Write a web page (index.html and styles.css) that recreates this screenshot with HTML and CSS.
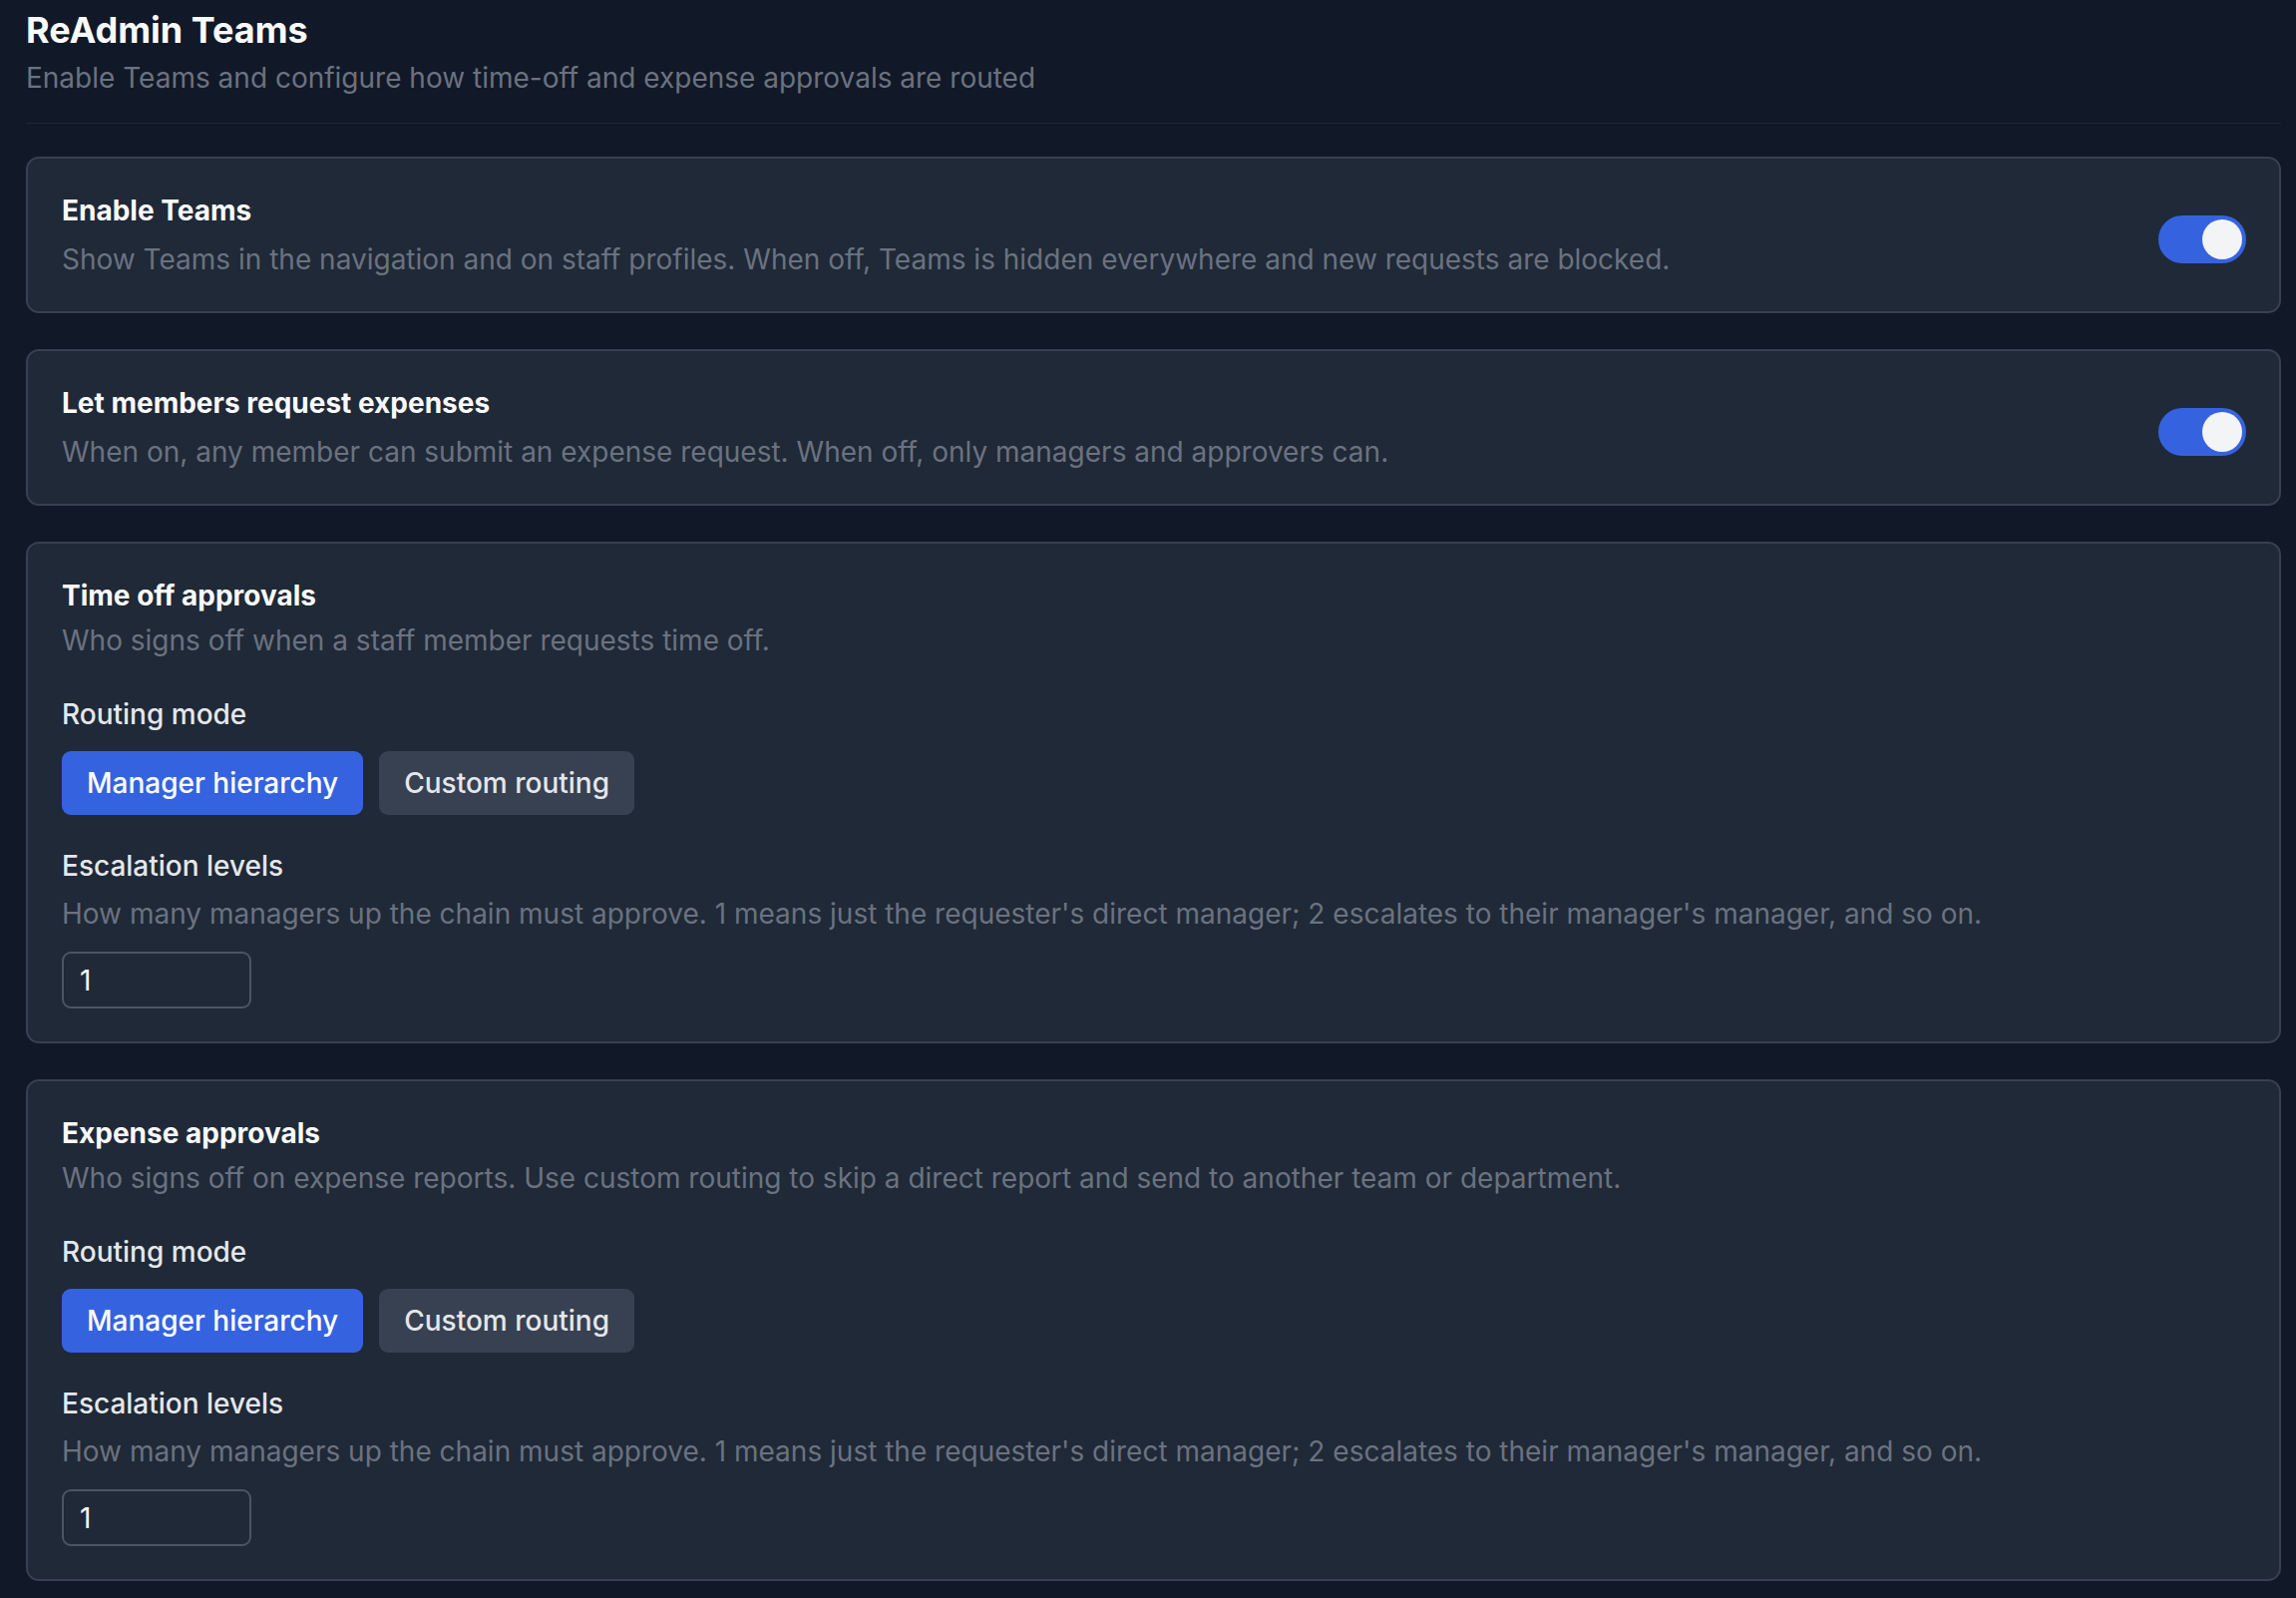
FILE: index.html
```html
<!DOCTYPE html>
<html lang="en">
<head>
    <meta charset="UTF-8">
    <title>ReAdmin Teams</title>
    <link rel="stylesheet" href="styles.css">
</head>
<body>
<div class="page">
    <div class="page-head">
        <h1>ReAdmin Teams</h1>
        <p>Enable Teams and configure how time-off and expense approvals are routed</p>
    </div>

    <div class="card row">
        <div>
            <h3>Enable Teams</h3>
            <p class="muted">Show Teams in the navigation and on staff profiles. When off, Teams is hidden everywhere and new requests are blocked.</p>
        </div>
        <span class="switch on"><span class="knob"></span></span>
    </div>

    <div class="card row">
        <div>
            <h3>Let members request expenses</h3>
            <p class="muted">When on, any member can submit an expense request. When off, only managers and approvers can.</p>
        </div>
        <span class="switch on"><span class="knob"></span></span>
    </div>

    <div class="card">
        <h3>Time off approvals</h3>
        <p class="muted">Who signs off when a staff member requests time off.</p>

        <div class="field">
            <label>Routing mode</label>
            <div class="seg">
                <button class="active">Manager hierarchy</button>
                <button>Custom routing</button>
            </div>
        </div>

        <div class="field">
            <label>Escalation levels</label>
            <p class="muted">How many managers up the chain must approve. 1 means just the requester's direct manager; 2 escalates to their manager's manager, and so on.</p>
            <input class="num" type="text" value="1">
        </div>
    </div>

    <div class="card">
        <h3>Expense approvals</h3>
        <p class="muted">Who signs off on expense reports. Use custom routing to skip a direct report and send to another team or department.</p>

        <div class="field">
            <label>Routing mode</label>
            <div class="seg">
                <button class="active">Manager hierarchy</button>
                <button>Custom routing</button>
            </div>
        </div>

        <div class="field">
            <label>Escalation levels</label>
            <p class="muted">How many managers up the chain must approve. 1 means just the requester's direct manager; 2 escalates to their manager's manager, and so on.</p>
            <input class="num" type="text" value="1">
        </div>
    </div>
</div>
</body>
</html>
```

FILE: styles.css
```css
*, :after, :before {
    box-sizing: border-box;
}
html, body {
    margin: 0;
    background: #111827;
}
body {
    font-family: Inter, "Noto Sans", sans-serif;
    font-size: 28px;
    line-height: 42px;
    color: #f9fafb;
}
h1, h3, p {
    margin: 0;
}
.page {
    padding: 6px 15px 20px 26px;
}
.page-head {
    padding-bottom: 24px;
    margin-bottom: 33px;
    border-bottom: 1px solid #1f2734;
}
.page-head h1 {
    font-size: 36px;
    line-height: 48px;
    font-weight: 700;
}
.page-head p {
    margin-top: 3px;
    color: #6b7280;
}
.card {
    margin-bottom: 36px;
    padding: 31px 34px 33px;
    background: #1f2937;
    border: 2px solid #374151;
    border-radius: 13px;
}
.card h3 {
    font-size: 28px;
    font-weight: 700;
}
.card h3 + .muted {
    margin-top: 3px;
}
.card.row {
    display: flex;
    align-items: center;
    justify-content: space-between;
    gap: 24px;
    padding-bottom: 31px;
    padding-right: 33px;
}
.card.row h3 + .muted {
    margin-top: 7px;
}
.muted {
    color: #6b7280;
}
.switch {
    flex: none;
    display: flex;
    align-items: center;
    justify-content: flex-end;
    width: 88px;
    height: 48px;
    margin-top: 9px;
    padding: 4px;
    border-radius: 24px;
    background: #4b5563;
}
.switch.on {
    background: #3563e0;
}
.switch .knob {
    width: 40px;
    height: 40px;
    border-radius: 50%;
    background: #f3f4f6;
}
.field {
    margin-top: 30px;
}
.field:first-of-type {
    margin-top: 32px;
}
.field label {
    display: block;
    font-weight: 500;
    color: #e5e7eb;
}
.field .muted {
    margin-top: 6px;
}
.seg {
    display: flex;
    gap: 16px;
    margin-top: 16px;
}
.seg button {
    height: 64px;
    padding: 0 25px;
    font-family: inherit;
    font-size: 28px;
    font-weight: 500;
    color: #e5e7eb;
    background: #374151;
    border: 0;
    border-radius: 9px;
}
.seg button.active {
    color: #fff;
    background: #3563e0;
}
.num {
    display: block;
    width: 190px;
    height: 57px;
    margin-top: 17px;
    padding: 0 16px;
    font-family: inherit;
    font-size: 28px;
    color: #f9fafb;
    background: #1f2937;
    border: 2px solid #4b5563;
    border-radius: 9px;
}
```
